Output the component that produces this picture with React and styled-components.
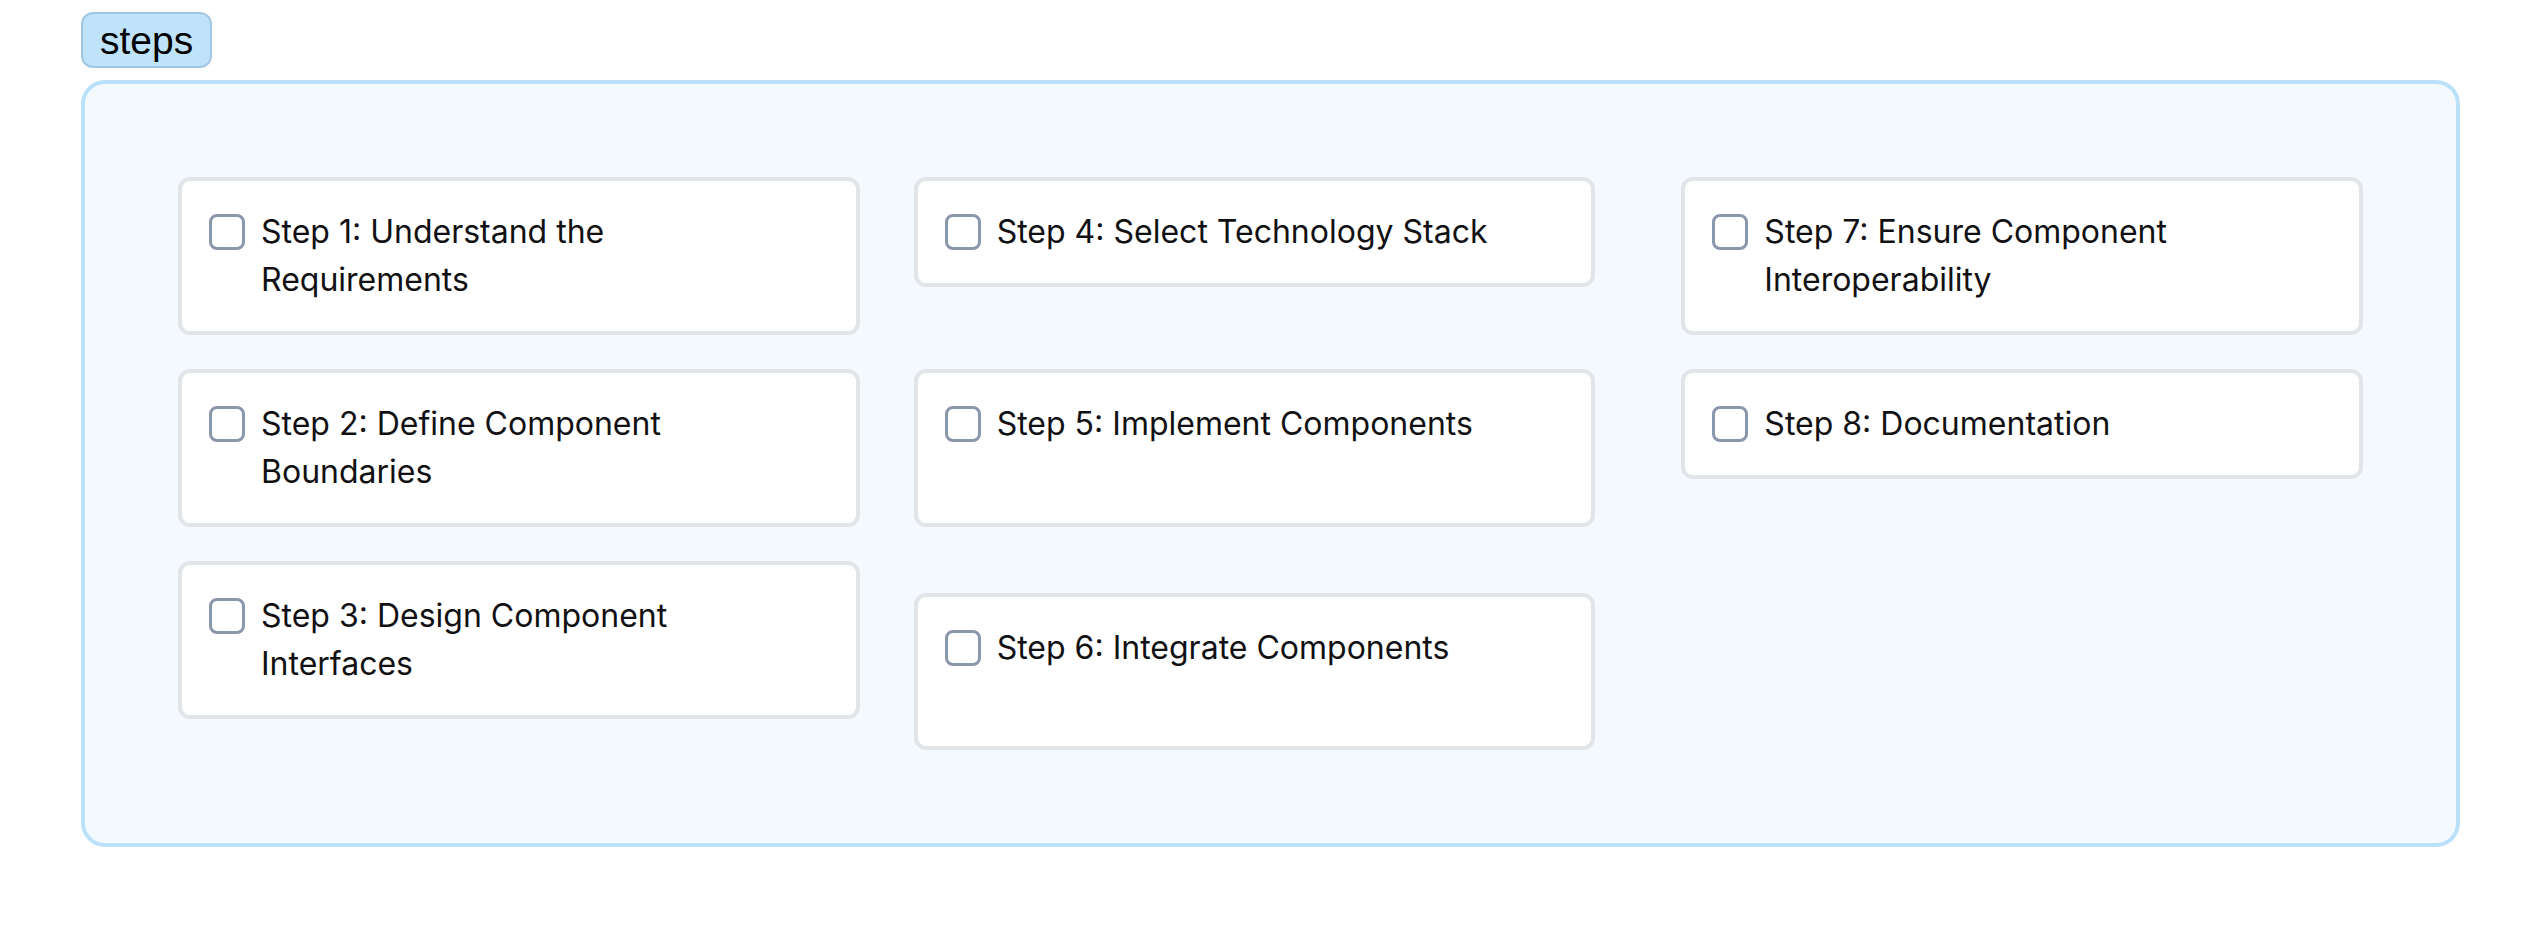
import React from "react"
import styled, { createGlobalStyle } from "styled-components"

const GlobalStyle = createGlobalStyle`
  body {
    margin: 0;
    background: #ffffff;
    font-family: Inter, "Noto Sans", sans-serif;
  }
`

const Page = styled.div`
  padding: 12px 80px 80px 81px;
`

const Tag = styled.div`
  width: fit-content;
  height: 56px;
  box-sizing: border-box;
  padding: 5px 17px 0 17px;
  background: #bee3fb;
  border: 2px solid #a2c7e4;
  border-radius: 12px;
  font-family: "Liberation Sans", Arial, sans-serif;
  font-size: 39px;
  line-height: 44px;
  color: #000;
`

const Panel = styled.div`
  margin-top: 12px;
  padding: 93px;
  background: #f4f9fe;
  border: 4px solid #bbe1fa;
  border-radius: 24px;
  display: flex;
  align-items: flex-start;
`

const Column = styled.div`
  width: 682px;
  margin-left: ${p => p.$offset || 0}px;
  display: flex;
  flex-direction: column;
  gap: 34px;
`

const Card = styled.div`
  box-sizing: border-box;
  min-height: ${p => p.$minHeight || 0}px;
  margin-top: ${p => p.$push || 0}px;
  padding: 27px 60px 27px 27px;
  background: #ffffff;
  border: 4px solid #e2e4e7;
  border-radius: 12px;
  display: flex;
  align-items: flex-start;
  gap: 16px;
`

const Box = styled.span`
  flex: none;
  box-sizing: border-box;
  width: 36px;
  height: 36px;
  margin-top: 6px;
  border: 3.5px solid #8a97ad;
  border-radius: 8px;
  background: #fff;
`

const Label = styled.span`
  font-size: 32px;
  line-height: 48px;
  color: #111113;
`

const columns = [
  {
    offset: 0,
    items: [
      { text: "Step 1: Understand the Requirements" },
      { text: "Step 2: Define Component Boundaries" },
      { text: "Step 3: Design Component Interfaces" },
    ],
  },
  {
    offset: 54,
    items: [
      { text: "Step 4: Select Technology Stack" },
      { text: "Step 5: Implement Components", push: 48, minHeight: 158 },
      { text: "Step 6: Integrate Components", push: 32, minHeight: 157 },
    ],
  },
  {
    offset: 86,
    items: [
      { text: "Step 7: Ensure Component Interoperability" },
      { text: "Step 8: Documentation" },
    ],
  },
]

const App = () => (
  <>
    <GlobalStyle />
    <Page>
      <Tag>steps</Tag>
      <Panel>
        {columns.map((col, i) => (
          <Column key={i} $offset={col.offset}>
            {col.items.map(item => (
              <Card key={item.text} $push={item.push} $minHeight={item.minHeight}>
                <Box />
                <Label>{item.text}</Label>
              </Card>
            ))}
          </Column>
        ))}
      </Panel>
    </Page>
  </>
)

export default App
